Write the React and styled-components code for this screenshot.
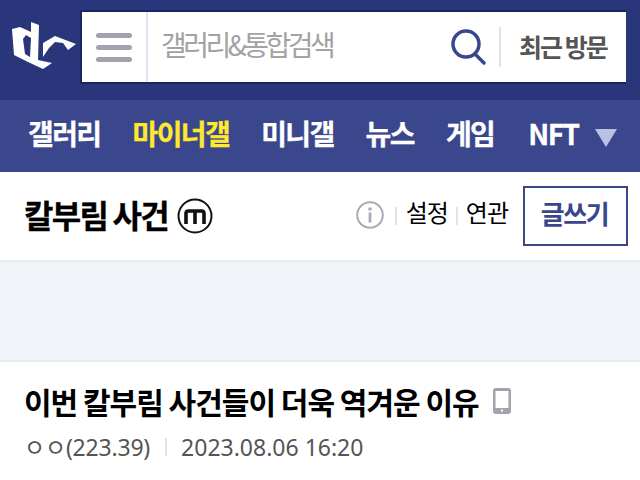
import React from 'react';
import styled, { createGlobalStyle } from 'styled-components';

const Global = createGlobalStyle`
  html, body { margin: 0; padding: 0; background: #fff; }
  body { font-family: "Noto Sans CJK KR", "Noto Sans", sans-serif; overflow: hidden; }
  * { box-sizing: border-box; }
`;

const Page = styled.div`
  width: 640px;
  height: 480px;
  overflow: hidden;
`;

const Header = styled.header`
  height: 100px;
  background: #29367c;
  display: flex;
  align-items: flex-start;
  padding: 10px 14px 0 10px;
`;

const LogoBox = styled.div`
  width: 70px;
  height: 74px;
  flex: none;
`;

const SearchBox = styled.div`
  flex: 1;
  height: 74px;
  background: #fff;
  border: 2px solid #1c2560;
  border-right: 0;
  display: flex;
  align-items: stretch;
`;

const MenuButton = styled.div`
  width: 66px;
  border-right: 2px solid #dfe3ef;
  display: flex;
  flex-direction: column;
  justify-content: center;
  gap: 7px;
  padding-left: 14px;
  flex: none;
`;

const MenuLine = styled.span`
  display: block;
  width: 36px;
  height: 5px;
  border-radius: 3px;
  background: #a2a3ae;
`;

const Placeholder = styled.div`
  flex: 1;
  padding-left: 13px;
  font-size: 28px;
  letter-spacing: -3.5px;
  color: #a3a3a3;
  line-height: 64px;
  white-space: nowrap;
`;

const SearchIcon = styled.svg`
  width: 36px;
  height: 38px;
  align-self: center;
  flex: none;
  margin-right: 13px;
`;

const RecentBox = styled.div`
  height: 40px;
  align-self: center;
  border-left: 2px solid #dfe3ef;
  width: 127px;
  display: flex;
  align-items: center;
  padding: 0 0 3px 18px;
  font-size: 25px;
  font-weight: 700;
  letter-spacing: -2px;
  color: #555;
  white-space: nowrap;
`;

const Nav = styled.nav`
  height: 72px;
  background: #3b478c;
  display: flex;
  align-items: center;
  padding: 0 0 0 28px;
`;

const NavItem = styled.span`
  font-size: 28px;
  font-weight: 700;
  letter-spacing: -1.6px;
  -webkit-text-stroke: 0.3px currentColor;
  color: ${(p) => (p.$active ? '#ffe92e' : '#fff')};
  margin-right: ${(p) => p.$gap}px;
  white-space: nowrap;
  line-height: 66px;
  height: 72px;
`;

const NavArrow = styled.span`
  width: 0;
  height: 0;
  border-left: 11px solid transparent;
  border-right: 11px solid transparent;
  border-top: 18px solid #bcc1e4;
  margin-top: 4px;
`;

const TitleRow = styled.div`
  height: 90px;
  background: #fff;
  border-bottom: 2px solid #e9eaf0;
  display: flex;
  align-items: center;
  padding: 0 12px 0 24px;
`;

const BoardName = styled.h1`
  margin: 0;
  font-size: 32px;
  font-weight: 700;
  letter-spacing: -1.75px;
  -webkit-text-stroke: 0.3px currentColor;
  color: #000;
  line-height: 1;
  white-space: nowrap;
  padding-bottom: 5px;
`;

const MBadge = styled.svg`
  width: 36px;
  height: 36px;
  margin-left: 9px;
  flex: none;
`;

const RowRight = styled.div`
  margin-left: auto;
  display: flex;
  align-items: center;
`;

const InfoIcon = styled.svg`
  width: 28px;
  height: 28px;
  margin-bottom: 3px;
  flex: none;
`;

const Divider = styled.span`
  width: 2px;
  height: 18px;
  background: #dfe3ef;
  margin: 0 ${(p) => p.$right}px 0 ${(p) => p.$left}px;
  flex: none;
`;

const TextLink = styled.span`
  font-size: 24px;
  letter-spacing: -1px;
  color: #000;
  white-space: nowrap;
  padding-bottom: 9px;
`;

const WriteButton = styled.div`
  width: 105px;
  height: 60px;
  border: 2px solid #3b478c;
  margin-left: 15px;
  display: flex;
  align-items: center;
  justify-content: center;
  padding: 0 2px 7px 0;
  font-size: 26px;
  font-weight: 700;
  letter-spacing: -1.5px;
  color: #3b478c;
`;

const Gap = styled.div`
  height: 98px;
  background: #f0f3f8;
`;

const Post = styled.article`
  border-top: 2px solid #e9eaf0;
  padding: 19px 24px 0;
`;

const PostTitleRow = styled.div`
  display: flex;
  align-items: center;
  height: 40px;
`;

const PostTitle = styled.h2`
  margin: 0;
  font-size: 30px;
  font-weight: 700;
  letter-spacing: -1px;
  color: #000;
  white-space: nowrap;
  line-height: 36px;
`;

const PhoneIcon = styled.svg`
  width: 18px;
  height: 26px;
  margin-left: 14px;
  flex: none;
`;

const Meta = styled.div`
  display: flex;
  align-items: center;
  margin-top: 9px;
  font-family: "Noto Sans", "Noto Sans CJK KR", sans-serif;
  font-size: 23px;
  color: #555;
  white-space: nowrap;
  line-height: 34px;
`;

const Author = styled.span`
  letter-spacing: -0.2px;
`;

const Logo = () => (
  <svg width="70" height="74" viewBox="10 10 70 74">
    <path
      fill="#fff"
      fillRule="evenodd"
      d="M31 22 L39 25 L38 60 L52 63 L43 69 L28 62 L14 55 L12 29 L20 27 L31 32 Z M23 39 L25 54 L30 57 L31 38 L26 35 Z"
    />
    <path fill="#fff" d="M43 43 L55 36 L76 44 L68 50 L63 43 L55 42 L49 48 L43 57 Z" />
  </svg>
);

export default function App() {
  return (
    <Page>
      <Global />
      <Header>
        <LogoBox>
          <Logo />
        </LogoBox>
        <SearchBox>
          <MenuButton>
            <MenuLine />
            <MenuLine />
            <MenuLine />
          </MenuButton>
          <Placeholder>갤러리&amp;통합검색</Placeholder>
          <SearchIcon viewBox="0 0 36 38" fill="none" stroke="#3b478c" strokeWidth="3.5" strokeLinecap="round">
            <circle cx="16" cy="16" r="13" />
            <path d="M25 26 L34 35" />
          </SearchIcon>
          <RecentBox>최근 방문</RecentBox>
        </SearchBox>
      </Header>
      <Nav>
        <NavItem $gap={32}>갤러리</NavItem>
        <NavItem $gap={32} $active>마이너갤</NavItem>
        <NavItem $gap={32}>미니갤</NavItem>
        <NavItem $gap={32}>뉴스</NavItem>
        <NavItem $gap={34}>게임</NavItem>
        <NavItem $gap={17}>NFT</NavItem>
        <NavArrow />
      </Nav>
      <TitleRow>
        <BoardName>칼부림 사건</BoardName>
        <MBadge viewBox="0 0 36 36" fill="none" stroke="#111">
          <circle cx="18" cy="18" r="16.5" strokeWidth="2" />
          <path d="M9 26 V15.5 Q9 13 11.5 13 H24.5 Q27 13 27 15.5 V26 M18 13 V26" strokeWidth="3.6" />
        </MBadge>
        <RowRight>
          <InfoIcon viewBox="0 0 28 28" fill="none">
            <circle cx="14" cy="14" r="12.8" stroke="#a9abb8" strokeWidth="2" />
            <circle cx="14" cy="8" r="1.8" fill="#a9abb8" />
            <rect x="12.6" y="11.5" width="2.8" height="10" fill="#a9abb8" />
          </InfoIcon>
          <Divider $left={11} $right={9} />
          <TextLink>설정</TextLink>
          <Divider $left={8} $right={8} />
          <TextLink>연관</TextLink>
          <WriteButton>글쓰기</WriteButton>
        </RowRight>
      </TitleRow>
      <Gap />
      <Post>
        <PostTitleRow>
          <PostTitle>이번 칼부림 사건들이 더욱 역겨운 이유</PostTitle>
          <PhoneIcon viewBox="0 0 18 26">
            <path
              fill="#a2a3ae"
              fillRule="evenodd"
              d="M3 0 H15 A3 3 0 0 1 18 3 V23 A3 3 0 0 1 15 26 H3 A3 3 0 0 1 0 23 V3 A3 3 0 0 1 3 0 Z M2.5 3 V20 H15.5 V3 Z M8 21.5 V23.5 H10 V21.5 Z"
            />
          </PhoneIcon>
        </PostTitleRow>
        <Meta>
          <Author>ㅇㅇ(223.39)</Author>
          <Divider $left={15} $right={14} />
          2023.08.06 16:20
        </Meta>
      </Post>
    </Page>
  );
}
